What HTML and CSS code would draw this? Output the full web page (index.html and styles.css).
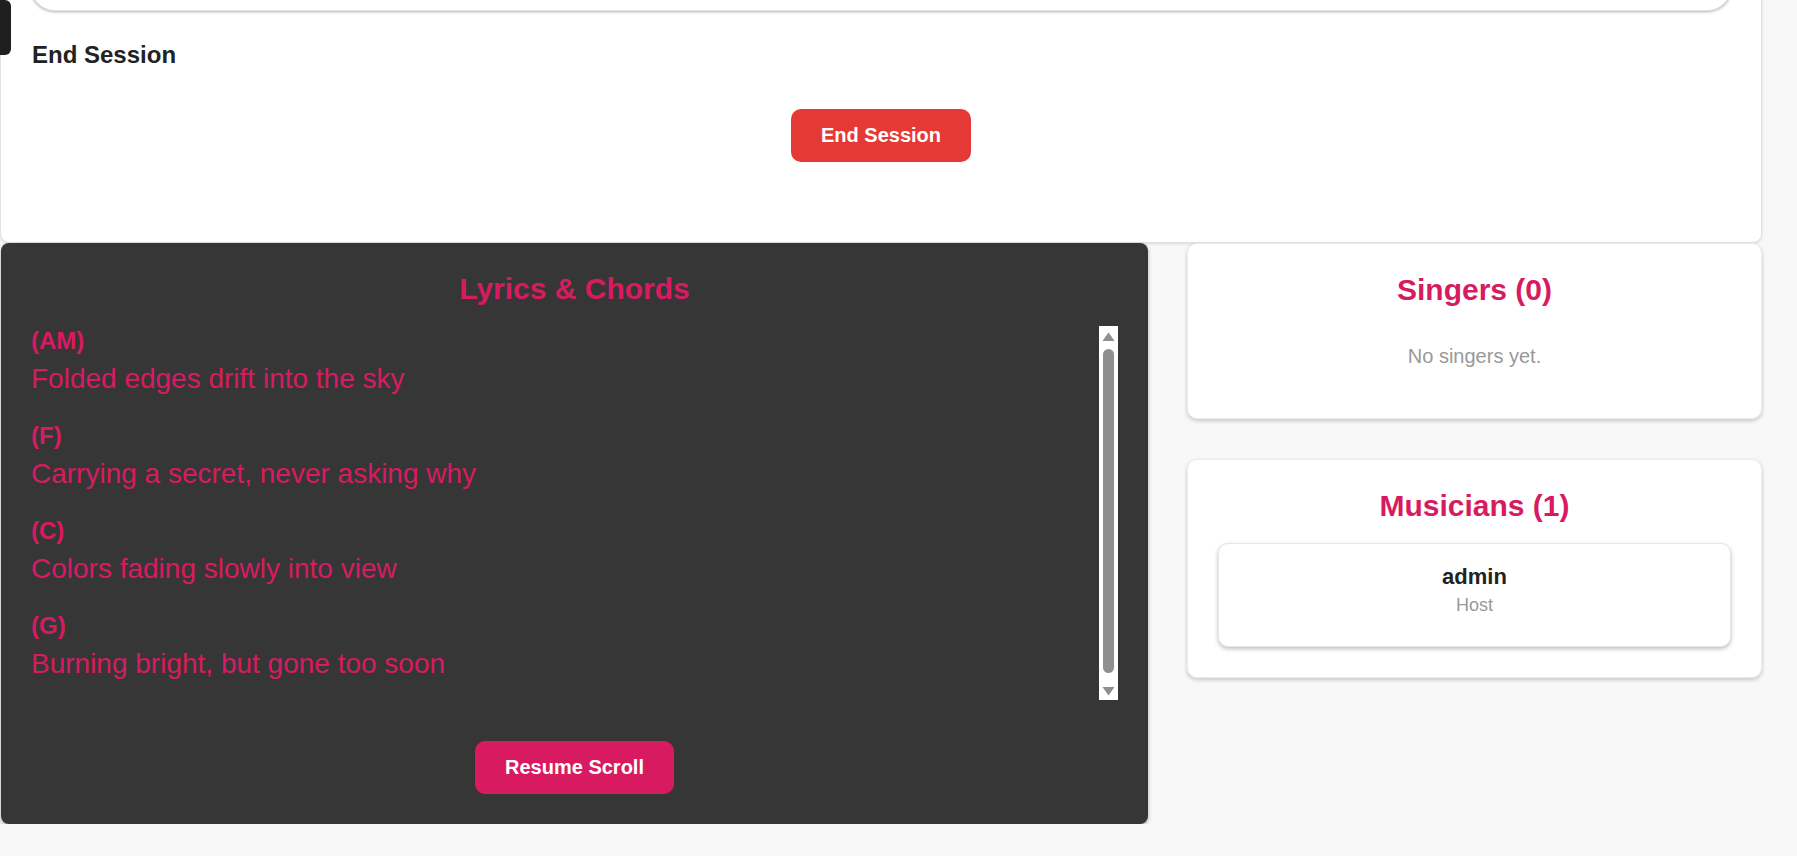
FILE: index.html
```html
<!DOCTYPE html>
<html lang="en">
<head>
<meta charset="utf-8">
<title>Session</title>
<link rel="stylesheet" href="styles.css">
</head>
<body>
<div class="side-tab"></div>
<div class="page">
  <section class="top-card">
    <div class="inner-card"></div>
    <h3 class="section-title">End Session</h3>
    <div class="btn-row btn-row-top">
      <button class="btn btn-danger">End Session</button>
    </div>
  </section>

  <div class="main-row">
    <section class="lyrics-panel">
      <h2 class="panel-title">Lyrics &amp; Chords</h2>
      <div class="lyrics-scroll">
        <div class="lyrics-text">
          <div class="verse">
            <div class="chord">(AM)</div>
            <div class="lyric">Folded edges drift into the sky</div>
          </div>
          <div class="verse">
            <div class="chord">(F)</div>
            <div class="lyric">Carrying a secret, never asking why</div>
          </div>
          <div class="verse">
            <div class="chord">(C)</div>
            <div class="lyric">Colors fading slowly into view</div>
          </div>
          <div class="verse">
            <div class="chord">(G)</div>
            <div class="lyric">Burning bright, but gone too soon</div>
          </div>
        </div>
        <div class="scrollbar">
          <svg class="sb-arrow" width="19" height="19" viewBox="0 0 19 19"><polygon points="3.5,15 9.5,6.5 15.5,15" fill="#8f8f8f"/></svg>
          <div class="sb-thumb"></div>
          <svg class="sb-arrow" width="19" height="19" viewBox="0 0 19 19"><polygon points="3.5,6 15.5,6 9.5,14.5" fill="#8f8f8f"/></svg>
        </div>
      </div>
      <div class="btn-row btn-row-lyrics">
        <button class="btn btn-pink">Resume Scroll</button>
      </div>
    </section>

    <aside class="side-col">
      <section class="card">
        <h2 class="card-title">Singers (0)</h2>
        <p class="empty">No singers yet.</p>
      </section>
      <section class="card">
        <h2 class="card-title">Musicians (1)</h2>
        <div class="member">
          <div class="member-name">admin</div>
          <div class="member-role">Host</div>
        </div>
      </section>
    </aside>
  </div>
</div>
</body>
</html>
```

FILE: styles.css
```css
* { box-sizing: border-box; }

html, body {
  margin: 0;
  padding: 0;
}

body {
  background: #f8f8f8;
  font-family: "Liberation Sans", Arial, sans-serif;
  color: #222;
  overflow: hidden;
}

.side-tab {
  position: fixed;
  left: 0;
  top: 0;
  width: 11px;
  height: 55px;
  background: #1f1f1f;
  border-radius: 0 6px 6px 0;
  z-index: 10;
}

.page {
  width: 1762px;
  margin-top: -150px;
}

.top-card {
  background: #fff;
  border: 1px solid #e2e2e2;
  border-radius: 0 0 9px 9px;
  padding: 20px 29px 80px;
  box-shadow: 0 1px 3px rgba(0, 0, 0, 0.12);
}

.inner-card {
  height: 140px;
  background: #fff;
  border: 1px solid #e4e4e4;
  border-radius: 25px;
  box-shadow: 0 1px 3px rgba(0, 0, 0, 0.3);
}

.section-title {
  margin: 30px 0 0 2px;
  font-size: 24px;
  line-height: 28px;
  font-weight: bold;
  color: #222;
}

.btn-row {
  display: flex;
  justify-content: center;
}

.btn-row-top { margin-top: 40px; }
.btn-row-lyrics { margin-top: 41px; }

.btn {
  font-family: "Liberation Sans", Arial, sans-serif;
  font-size: 20px;
  line-height: 23px;
  font-weight: bold;
  color: #fff;
  border: 0;
  border-radius: 10px;
  padding: 15px 30px;
  cursor: pointer;
}

.btn-danger { background: #e53935; }
.btn-pink { background: #d81b60; }

.main-row {
  display: flex;
  align-items: flex-start;
  gap: 39px;
  padding-left: 1px;
}

.lyrics-panel {
  width: 1147px;
  background: #363636;
  border-radius: 8px;
  padding: 29px 30px 30px;
  box-shadow: 0 2px 4px rgba(0, 0, 0, 0.3);
}

.panel-title {
  margin: 0 0 20px;
  font-size: 30px;
  line-height: 34px;
  font-weight: bold;
  color: #d81b60;
  text-align: center;
}

.lyrics-scroll {
  display: flex;
  height: 374px;
}

.lyrics-text {
  flex: 1;
  padding-top: 1px;
  overflow: hidden;
  color: #d81b60;
}

.verse { margin-bottom: 27px; }

.chord {
  font-size: 24px;
  line-height: 28px;
  font-weight: bold;
  margin-bottom: 8px;
}

.lyric {
  font-size: 28px;
  line-height: 32px;
}

.scrollbar {
  width: 19px;
  background: #fff;
  display: flex;
  flex-direction: column;
}

.sb-arrow {
  display: block;
  flex: none;
}

.sb-thumb {
  flex: 1;
  margin: 4px 4px 8px;
  background: #8f8f8f;
  border-radius: 6px;
}

.side-col {
  width: 575px;
  display: flex;
  flex-direction: column;
  gap: 40px;
}

.card {
  background: #fff;
  border: 1px solid #ececec;
  border-radius: 10px;
  padding: 29px 30px 30px;
  box-shadow: 0 2px 4px rgba(0, 0, 0, 0.2);
  text-align: center;
}

.card-title {
  margin: 0;
  font-size: 30px;
  line-height: 34px;
  font-weight: bold;
  color: #d81b60;
}

.empty {
  margin: 38px 0 20px;
  font-size: 20px;
  line-height: 23px;
  color: #999;
}

.member {
  margin-top: 20px;
  background: #fff;
  border: 1px solid #e6e6e6;
  border-radius: 10px;
  padding: 20px 20px 30px;
  box-shadow: 0 2px 4px rgba(0, 0, 0, 0.25);
}

.member-name {
  font-size: 22px;
  line-height: 25px;
  font-weight: bold;
  color: #222;
}

.member-role {
  margin-top: 6px;
  font-size: 18px;
  line-height: 21px;
  color: #999;
}
```
